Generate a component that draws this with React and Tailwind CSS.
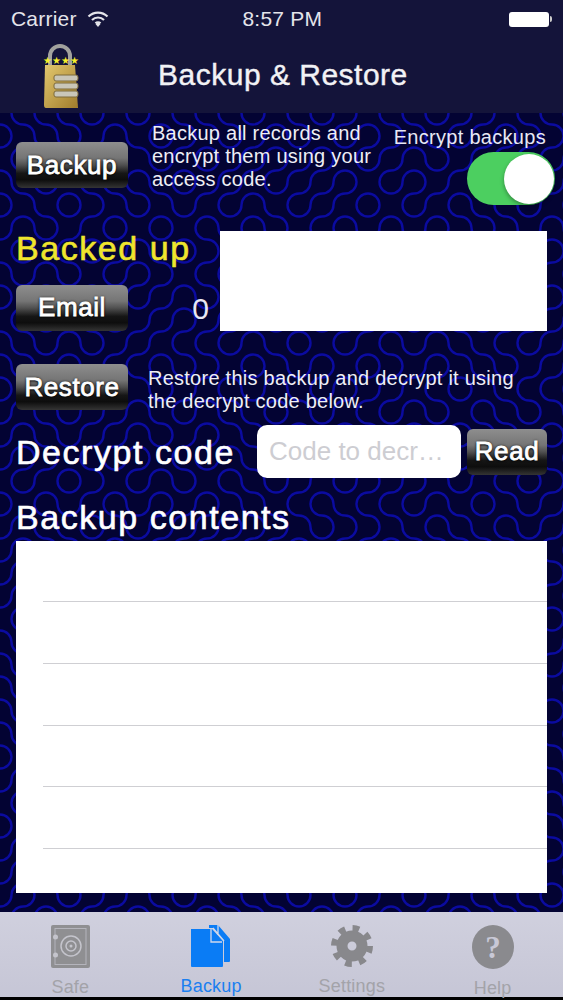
const TILE = 23;

// truchet tiles for the blue squiggle wallpaper
function Wallpaper() {
  const paths = [];
  let seed = 11;
  const rand = () => {
    seed = (seed * 16807) % 2147483647;
    return seed / 2147483647;
  };
  const r = TILE / 2;
  for (let row = 0; row < 36; row++) {
    for (let col = 0; col < 25; col++) {
      const x = col * TILE;
      const y = row * TILE;
      const d =
        rand() > 0.5
          ? `M${x + r} ${y}A${r} ${r} 0 0 1 ${x} ${y + r}M${x + TILE} ${y + r}A${r} ${r} 0 0 0 ${x + r} ${y + TILE}`
          : `M${x + r} ${y}A${r} ${r} 0 0 0 ${x + TILE} ${y + r}M${x} ${y + r}A${r} ${r} 0 0 1 ${x + r} ${y + TILE}`;
      paths.push(<path key={`${row}-${col}`} d={d} />);
    }
  }
  return (
    <svg className="absolute inset-0 w-full h-full" aria-hidden="true">
      <g fill="none" stroke="#0b0ba0" strokeWidth="2.4">
        {paths}
      </g>
    </svg>
  );
}

function GlossButton({ children, className }) {
  return (
    <button
      className={`rounded-md bg-[linear-gradient(#8e8e8e_0%,#757575_35%,#505050_50%,#161616_68%,#0d0d0d_82%,#343434_100%)] text-white text-[26px] tracking-[0.6px] [-webkit-text-stroke:0.8px_#fff] [text-shadow:0_1px_2px_#000,0_0_3px_#000] flex items-center justify-center ${className}`}
    >
      {children}
    </button>
  );
}

function Lock() {
  return (
    <svg width="38" height="65" viewBox="0 0 38 65" className="ml-[43px] mt-[12px] shrink-0">
      <defs>
        <linearGradient id="brass" x1="0" y1="0" x2="1" y2="1">
          <stop offset="0" stopColor="#e3c86e" />
          <stop offset="1" stopColor="#a07c2c" />
        </linearGradient>
      </defs>
      <path d="M7 26V12a10 10 0 0 1 20 0V26" fill="none" stroke="#a2a29e" strokeWidth="4" />
      <path d="M2 21H32L35 64H3Q1 64 1 61Z" fill="url(#brass)" />
      <g fill="#c9c6b8" stroke="#7d6a3a" strokeWidth="1">
        <rect x="11" y="31" width="24" height="6" rx="2" />
        <rect x="11" y="39" width="24" height="6" rx="2" />
        <rect x="11" y="47" width="24" height="6" rx="2" />
      </g>
      <text x="0" y="20" fontSize="10" fill="#f4ee2a" fontFamily="DejaVu Sans">★★★★</text>
    </svg>
  );
}

function TabItem({ label, active, children }) {
  return (
    <div className="flex-1 flex flex-col items-center">
      <div className="h-[44px] flex items-center justify-center">{children}</div>
      <span className={`text-[18px] tracking-[0.2px] leading-[22px] mt-[8px] ${active ? 'text-[#1b7ff0]' : 'text-[#a3a3a9]'}`}>{label}</span>
    </div>
  );
}

const heading = 'text-[34px] leading-[40px] tracking-[1.55px] [-webkit-text-stroke:0.6px_currentColor]';
const blurb = 'text-[20px] leading-[23px] tracking-[0.25px] text-[#eeeef6]';

export default function App() {
  return (
    <div className="w-[563px] h-[1000px] flex flex-col overflow-hidden bg-black font-['Liberation_Sans',Arial,sans-serif]">
      <header className="h-[113px] shrink-0 bg-[#14143a] text-white">
        <div className="h-[38px] flex items-center px-[11px] text-[#e4e4ea] text-[21px] tracking-[0.2px]">
          <span>Carrier</span>
          <svg width="22" height="16" viewBox="0 0 22 16" className="ml-[10px]" fill="none" stroke="#e4e4ea" strokeWidth="2.200">
            <path d="M1.500 5.500a13.500 13.500 0 0 1 19 0" />
            <path d="M5 9a8.500 8.500 0 0 1 12 0" />
            <path d="M8.500 12.300a3.500 3.500 0 0 1 5 0" />
            <path d="M11 16l-2.500-3a3.500 3.500 0 0 1 5 0z" fill="#e4e4ea" stroke="none" />
          </svg>
          <span className="flex-1 text-center pr-[53px]">8:57 PM</span>
          <div className="w-[40px] h-[15px] bg-white rounded-[3px]" />
          <div className="w-[2px] h-[6px] bg-[#ccc] rounded-r-sm ml-px" />
        </div>
        <div className="flex items-start -mt-[6px]">
          <Lock />
          <h1 className="text-[30px] leading-[36px] tracking-[0.5px] ml-[77px] mt-[25px] font-normal text-[#f2f2f5] [-webkit-text-stroke:0.4px_#f2f2f5]">Backup &amp; Restore</h1>
        </div>
      </header>

      <main className="relative flex-1 bg-[#030333] text-white overflow-hidden">
        <Wallpaper />
        <div className="relative px-[16px]">
          <section className="h-[118px] flex items-start">
            <GlossButton className="w-[112px] h-[46px] mt-[29px] shrink-0">Backup</GlossButton>
            <p className={`ml-[24px] mt-[9px] w-[232px] shrink-0 ${blurb}`}>
              Backup all records and encrypt them using your access code.
            </p>
            <div className="flex flex-col items-end ml-auto mt-[12px] -mr-[8px] shrink-0">
              <span className="text-[20px] leading-[24px] tracking-[0.3px] mr-[9px] whitespace-nowrap text-[#e8e8f4]">Encrypt backups</span>
              <div className="w-[88px] h-[53px] mt-[3px] rounded-full bg-[#4ccf60] flex items-center justify-end pr-[1px]">
                <div className="w-[50px] h-[50px] rounded-full bg-white shadow-[0_2px_4px_rgba(0,0,0,0.35)]" />
              </div>
            </div>
          </section>

          <section className="h-[100px] flex">
            <div className="w-[204px] shrink-0">
              <div className={`${heading} text-[#efe52d] -mt-[3px]`}>Backed up</div>
              <div className="flex items-center mt-[17px] -translate-y-px">
                <GlossButton className="w-[112px] h-[46px]">Email</GlossButton>
                <span className="ml-auto mr-[11px] text-[30px] text-[#e8e8f4] mt-[2px]">0</span>
              </div>
            </div>
            <div className="flex-1 bg-white" />
          </section>

          <section className="h-[46px] flex mt-[33px]">
            <GlossButton className="w-[112px] h-[46px] shrink-0">Restore</GlossButton>
            <p className={`ml-[20px] pt-[3px] whitespace-nowrap ${blurb}`}>
              Restore this backup and decrypt it using
              <br />
              the decrypt code below.
            </p>
          </section>

          <section className="flex items-center h-[53px] mt-[15px]">
            <div className={`w-[241px] shrink-0 whitespace-nowrap ${heading}`}>Decrypt code</div>
            <div className="w-[204px] h-[53px] bg-white rounded-[10px] flex items-center pl-[12px] text-[26px] text-[#cdcdd2] whitespace-nowrap">Code to decr…</div>
            <GlossButton className="w-[80px] h-[46px] ml-[6px]">Read</GlossButton>
          </section>

          <div className={`mt-[19px] ${heading}`}>Backup contents</div>

          <div className="h-[352px] mt-[4px] bg-white flex flex-col pl-[27px] pt-[60px]">
            {[0, 1, 2, 3, 4].map((i) => (
              <div key={i} className="h-[61.750px] shrink-0 border-t border-[#cfcfd3]" />
            ))}
          </div>
        </div>
      </main>

      <nav className="h-[85px] shrink-0 bg-[linear-gradient(#d0d0de,#c6c6d6)] flex pt-[13px] mb-[3px]">
        <TabItem label="Safe">
          <svg width="39" height="43" viewBox="0 0 39 43">
            <rect width="39" height="43" rx="2" fill="#8f8f92" />
            <rect x="4" y="3.500" width="31" height="36" fill="none" stroke="#b4b4bc" strokeWidth="1" />
            <circle cx="20" cy="21" r="10" fill="none" stroke="#c4c4cc" strokeWidth="1.500" />
            <circle cx="20" cy="21" r="5" fill="none" stroke="#c4c4cc" strokeWidth="1.500" />
            <circle cx="20" cy="21" r="1.500" fill="#c4c4cc" />
            <circle cx="4.500" cy="12" r="2.500" fill="#c4c4cc" />
            <circle cx="4.500" cy="30" r="2.500" fill="#c4c4cc" />
          </svg>
        </TabItem>
        <TabItem label="Backup" active>
          <svg width="40" height="42" viewBox="0 0 40 42">
            <path d="M18 0h9l12 14v22a1 1 0 0 1-1 1h-5V16L22 3h-4z" fill="#0a7cf5" />
            <path d="M0 4h21l11 12v25a1 1 0 0 1-1 1H1a1 1 0 0 1-1-1z" fill="#0a7cf5" />
            <path d="M20 4v13h11M27 0l0 10M22 3l11 13" fill="none" stroke="#cfd8ec" strokeWidth="1.300" />
          </svg>
        </TabItem>
        <TabItem label="Settings">
          <svg width="42" height="42" viewBox="0 0 42 42">
            <circle cx="21" cy="21" r="10" fill="none" stroke="#88888c" strokeWidth="11" />
            <circle cx="21" cy="21" r="17.500" fill="none" stroke="#88888c" strokeWidth="7" strokeDasharray="6.500 7.250" />
          </svg>
        </TabItem>
        <TabItem label="Help">
          <svg width="42" height="44" viewBox="0 0 42 44">
            <ellipse cx="21" cy="22" rx="21" ry="22" fill="#8a8a8e" />
            <text x="21" y="33" textAnchor="middle" fontSize="31" fontWeight="700" fill="#c8c8d6" fontFamily="Liberation Serif">?</text>
          </svg>
        </TabItem>
      </nav>
    </div>
  );
}
